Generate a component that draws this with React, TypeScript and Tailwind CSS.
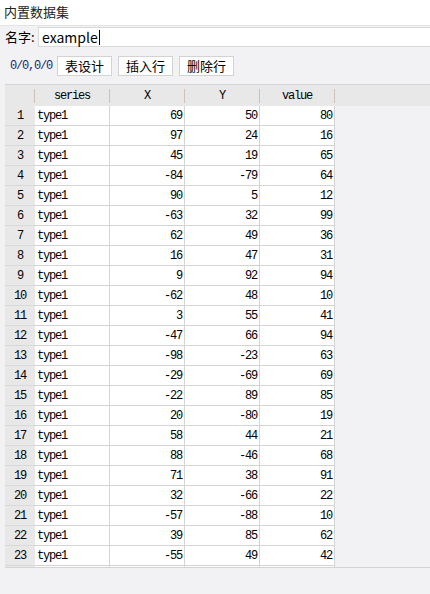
import React from 'react';

const rows: [number, number, number][] = [
	[69, 50, 80],
	[97, 24, 16],
	[45, 19, 65],
	[-84, -79, 64],
	[90, 5, 12],
	[-63, 32, 99],
	[62, 49, 36],
	[16, 47, 31],
	[9, 92, 94],
	[-62, 48, 10],
	[3, 55, 41],
	[-47, 66, 94],
	[-98, -23, 63],
	[-29, -69, 69],
	[-22, 89, 85],
	[20, -80, 19],
	[58, 44, 21],
	[88, -46, 68],
	[71, 38, 91],
	[32, -66, 22],
	[-57, -88, 10],
	[39, 85, 62],
	[-55, 49, 42],
];

const mono = "font-['Liberation_Mono','DejaVu_Sans_Mono',monospace] text-[12px] tracking-[-1.2px]";
const cjk = "font-['Noto_Sans_CJK_SC','Noto_Sans',sans-serif]";

function HeadCell({ label, w }: { label: string; w: string }) {
	return (
		<div className={`${w} h-full flex items-center`}>
			<div className="flex-1 text-center">{label}</div>
			<div className="w-px h-[14px] bg-[#cbc4b6]" />
		</div>
	);
}

function App() {
	return (
		<div className={`w-[430px] h-[594px] flex flex-col bg-[#f2f2f4] text-black overflow-hidden ${cjk}`}>
			<div className="h-[26px] shrink-0 bg-white border-b border-[#e4e4e4] pl-[4px] text-[13px] leading-[24px] text-[#222]">
				内置数据集
			</div>
			<div className="mt-[1px] flex items-center h-[20px] shrink-0">
				<div className="w-[38px] pl-[5px] text-[13px]">名字:</div>
				<div className="flex-1 h-full bg-white border border-r-0 border-[#d9d9d9] flex items-center pl-[3px] text-[14px] leading-none">
					example
					<span className="w-px h-[15px] bg-black ml-[1px]" />
				</div>
			</div>
			<div className="mt-[9px] flex items-center h-[20px] shrink-0">
				<div className={`w-[57px] pl-[10px] text-[#1c1c74] ${mono}`}>0/0,0/0</div>
				<div className="flex gap-[6px]">
					{['表设计', '插入行', '删除行'].map((b) => (
						<div key={b} className="w-[55px] h-[20px] bg-white border border-[#d3d3d3] flex items-center justify-center text-[13px]">
							{b}
						</div>
					))}
				</div>
			</div>
			<div className="mt-[8px] ml-[5px] h-[484px] shrink-0 border-t border-b border-[#d4d4d4] overflow-hidden">
				<div className={`h-[21px] pt-px bg-[#e8e8e8] flex ${mono}`}>
					<HeadCell label="" w="w-[30px]" />
					<HeadCell label="series" w="w-[75px]" />
					<HeadCell label="X" w="w-[75px]" />
					<HeadCell label="Y" w="w-[75px]" />
					<HeadCell label="value" w="w-[75px]" />
				</div>
				{rows.map((r, i) => (
					<div key={i} className={`h-[20px] flex ${mono}`}>
						<div className="w-[30px] h-full bg-[#e8e8e8] border-b border-[#d9d9d9] flex items-center justify-center">
							{i + 1}
						</div>
						<div className="w-[75px] h-full bg-white border-r border-b border-[#d4d4d4] flex items-center pl-[2px]">
							type1
						</div>
						{r.map((v, j) => (
							<div key={j} className="w-[75px] h-full bg-white border-r border-b border-[#d4d4d4] flex items-center justify-end pr-[2px]">
								{v}
							</div>
						))}
					</div>
				))}
				<div className="h-[20px] flex">
					<div className="w-[30px] h-full bg-[#e8e8e8]" />
					<div className="w-[75px] h-full bg-white border-r border-[#d4d4d4]" />
					<div className="w-[75px] h-full bg-white border-r border-[#d4d4d4]" />
					<div className="w-[75px] h-full bg-white border-r border-[#d4d4d4]" />
					<div className="w-[75px] h-full bg-white border-r border-[#d4d4d4]" />
				</div>
			</div>
		</div>
	);
}

export default App;
